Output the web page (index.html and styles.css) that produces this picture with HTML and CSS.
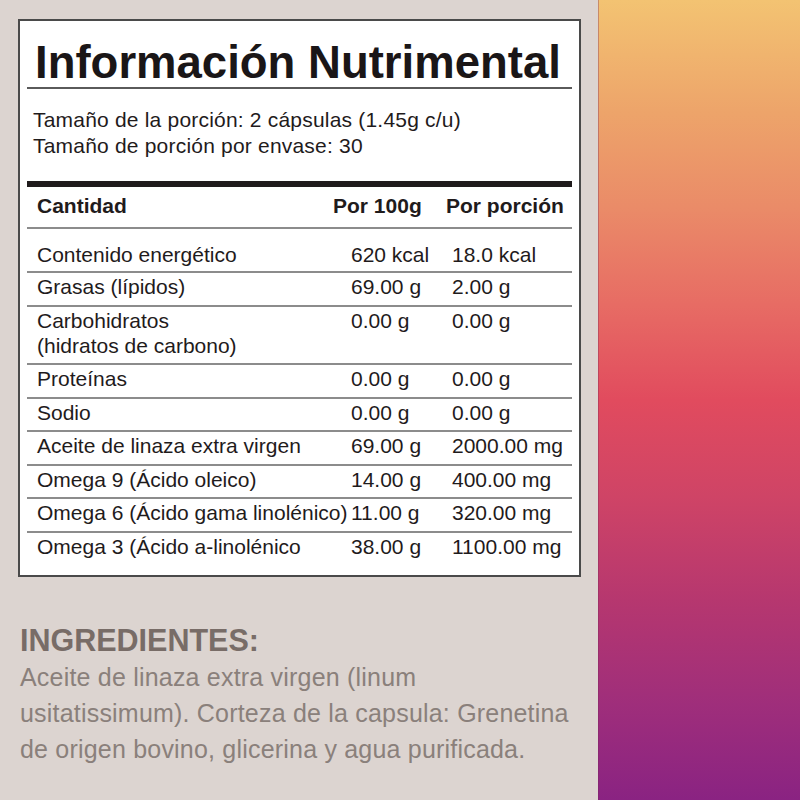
FILE: index.html
```html
<!DOCTYPE html>
<html lang="es">
<head>
<meta charset="utf-8">
<title>Información Nutrimental</title>
<link rel="stylesheet" href="styles.css">
</head>
<body>
<div class="page">
  <div class="left">
    <div class="box">
      <h1 class="title">Información Nutrimental</h1>
      <div class="serving">
        <div>Tamaño de la porción: 2 cápsulas (1.45g c/u)</div>
        <div>Tamaño de porción por envase: 30</div>
      </div>
      <div class="bar"></div>
      <div class="table">
        <div class="row head">
          <div>Cantidad</div>
          <div class="h2">Por 100g</div>
          <div class="h3">Por porción</div>
        </div>
        <div class="row first">
          <div>Contenido energético</div><div>620 kcal</div><div>18.0 kcal</div>
        </div>
        <div class="row">
          <div>Grasas (lípidos)</div><div>69.00 g</div><div>2.00 g</div>
        </div>
        <div class="row">
          <div>Carbohidratos<br>(hidratos de carbono)</div><div>0.00 g</div><div>0.00 g</div>
        </div>
        <div class="row">
          <div>Proteínas</div><div>0.00 g</div><div>0.00 g</div>
        </div>
        <div class="row">
          <div>Sodio</div><div>0.00 g</div><div>0.00 g</div>
        </div>
        <div class="row">
          <div>Aceite de linaza extra virgen</div><div>69.00 g</div><div>2000.00 mg</div>
        </div>
        <div class="row">
          <div>Omega 9 (Ácido oleico)</div><div>14.00 g</div><div>400.00 mg</div>
        </div>
        <div class="row">
          <div>Omega 6 (Ácido gama linolénico)</div><div>11.00 g</div><div>320.00 mg</div>
        </div>
        <div class="row last">
          <div>Omega 3 (Ácido a-linolénico</div><div>38.00 g</div><div>1100.00 mg</div>
        </div>
      </div>
    </div>
    <div class="ingredients">
      <h2 class="ing-title">INGREDIENTES:</h2>
      <p class="ing-text">Aceite de linaza extra virgen (linum<br>usitatissimum). Corteza de la capsula: Grenetina<br>de origen bovino, glicerina y agua purificada.</p>
    </div>
  </div>
  <div class="right"></div>
</div>
</body>
</html>
```

FILE: styles.css
```css
html, body {
  margin: 0;
  padding: 0;
}
body {
  font-family: "Liberation Sans", Arial, sans-serif;
  color: #1f1b1c;
}
.page {
  display: flex;
  width: 800px;
  height: 800px;
  overflow: hidden;
}
.left {
  width: 598px;
  flex: none;
  background: #dcd4d0;
  padding: 19px 0 0 18px;
  box-sizing: border-box;
}
.right {
  flex: 1;
  background: linear-gradient(to bottom, #f3c372 0%, #eda46a 14%, #ea8b68 26%, #e76c64 38%, #e14b5e 50%, #cf4466 62%, #b6376f 75%, #9f2e7b 88%, #8a2382 100%);
  box-shadow: inset 1px 0 0 rgba(120, 40, 90, 0.35);
}
.box {
  width: 563px;
  height: 558px;
  box-sizing: border-box;
  background: #fff;
  border: 2px solid #4a4a4a;
  padding: 18px 7px 0 7px;
}
.title {
  margin: 0;
  padding-left: 8px;
  font-size: 45.5px;
  line-height: 48px;
  font-weight: bold;
  color: #1a1617;
  border-bottom: 2px solid #5a5a5a;
}
.serving {
  margin-top: 18px;
  padding-left: 6px;
  font-size: 21px;
  line-height: 26px;
  letter-spacing: 0.2px;
}
.bar {
  margin-top: 22px;
  height: 6px;
  background: #1f1b1c;
}
.row {
  display: grid;
  grid-template-columns: 314px 101px 1fr;
  padding: 1px 0 5.5px 10px;
  font-size: 21px;
  line-height: 25px;
  border-bottom: 2px solid #8c8c8c;
}
.row.head {
  padding-top: 6px;
  padding-bottom: 9px;
  font-weight: bold;
}
.row.head .h2 {
  margin-left: -18px;
}
.row.head .h3 {
  margin-left: -6px;
}
.row.first {
  padding-top: 13px;
  padding-bottom: 4px;
}
.row.last {
  border-bottom: none;
}
.ingredients {
  padding-left: 2px;
}
.ing-title {
  margin: 55px 0 0 0;
  font-size: 30.5px;
  line-height: 17px;
  font-weight: bold;
  color: #786c67;
}
.ing-text {
  margin: 10px 0 0 0;
  font-size: 25px;
  line-height: 36px;
  letter-spacing: 0.2px;
  color: #8a807b;
}
```
